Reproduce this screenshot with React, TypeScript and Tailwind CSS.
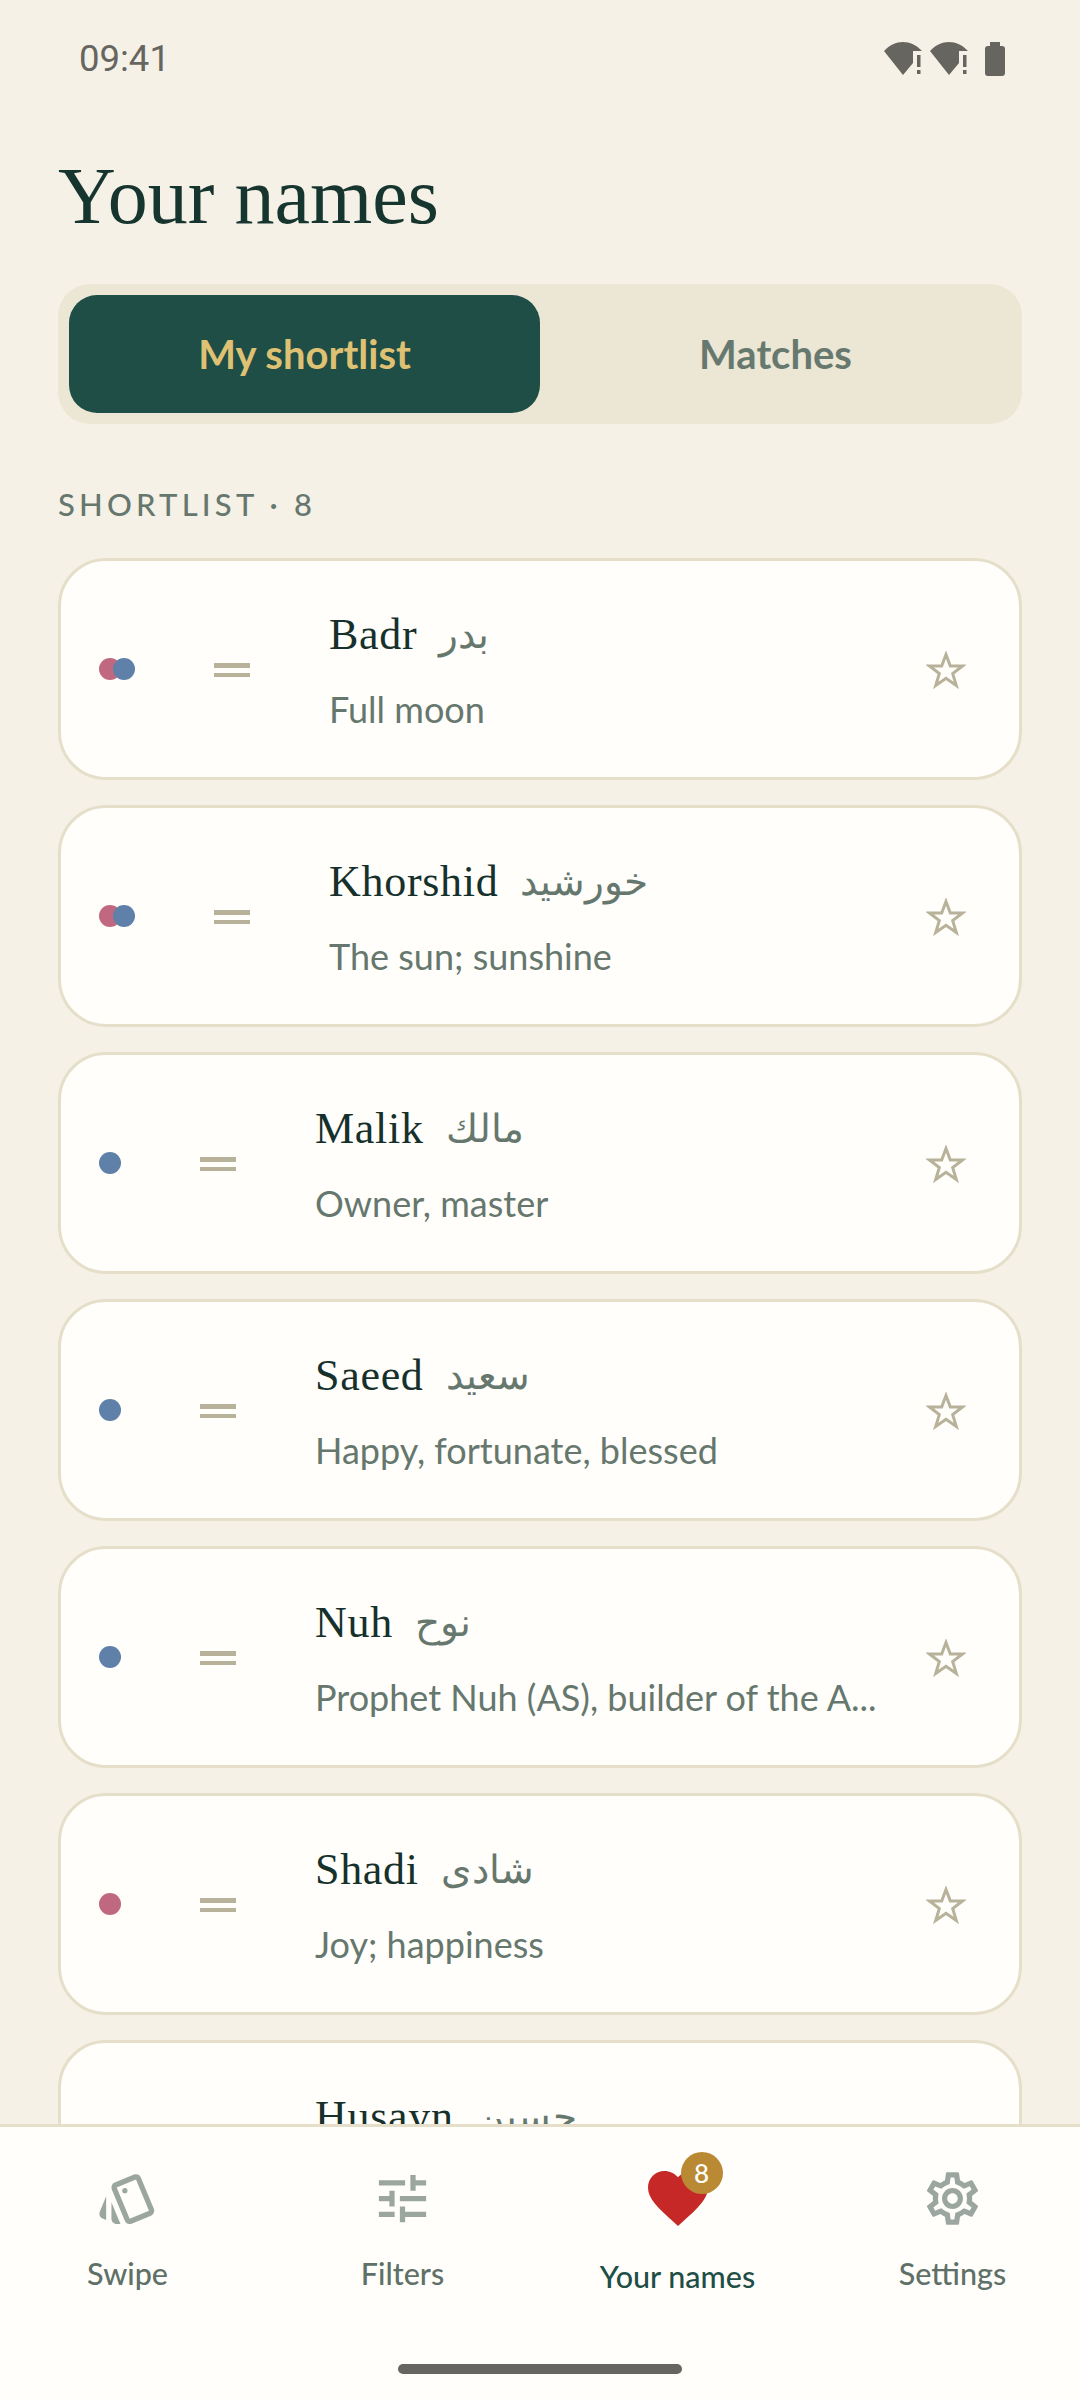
import { MdFavorite, MdOutlineSettings, MdOutlineStyle, MdTune } from "react-icons/md"

const names = [
  { latin: "Badr", arabic: "بدر", meaning: "Full moon", dots: ["pink", "blue"] },
  { latin: "Khorshid", arabic: "خورشيد", meaning: "The sun; sunshine", dots: ["pink", "blue"] },
  { latin: "Malik", arabic: "مالك", meaning: "Owner, master", dots: ["blue"] },
  { latin: "Saeed", arabic: "سعيد", meaning: "Happy, fortunate, blessed", dots: ["blue"] },
  { latin: "Nuh", arabic: "نوح", meaning: "Prophet Nuh (AS), builder of the A...", dots: ["blue"] },
  { latin: "Shadi", arabic: "شادى", meaning: "Joy; happiness", dots: ["pink"] },
  // sits under the nav, only the top of the name shows
  { latin: "Husayn", arabic: "حسين", meaning: "", dots: [] },
]

function WifiAlert() {
  return (
    <svg width="40" height="34" viewBox="0 0 40 34" fill="#67655f">
      <path d="M19 33 L0 9 C11 -3 27 -3 38 9 L29 9 L29 21 Z" />
      <rect x="33" y="13" width="3.5" height="12" />
      <rect x="33" y="28" width="3.5" height="4" />
    </svg>
  )
}

function Battery() {
  return (
    <svg width="20" height="34" viewBox="0 0 20 34" fill="#67655f">
      <path d="M5 0 H15 V4 H17 Q20 4 20 7 V31 Q20 34 17 34 H3 Q0 34 0 31 V7 Q0 4 3 4 H5 Z" />
    </svg>
  )
}

function StarOutline() {
  return (
    <svg className="ml-[28px] mt-[2px] shrink-0" width="40" height="38" viewBox="0 0 40 38" fill="none" stroke="#b8b29b" strokeWidth="3">
      <polygon points="20,3.5 24.3,15 36.5,15 26.7,22.6 30.3,34.5 20,27.3 9.7,34.5 13.3,22.6 3.5,15 15.7,15" />
    </svg>
  )
}

function NameCard({ latin, arabic, meaning, dots }: (typeof names)[number]) {
  return (
    <div className="flex h-[222px] shrink-0 items-center rounded-[48px] border-[3px] border-[#e5dfca] bg-[#fffefa] pl-[38px] pr-[53px]">
      <div className="flex min-w-[22px]">
        {dots.map((dot, i) => (
          <span
            key={dot}
            className={`h-[22px] w-[22px] rounded-full ${dot === "pink" ? "bg-[#c0687f]" : "bg-[#5f80a8]"} ${i > 0 ? "-ml-[8px]" : ""}`}
          />
        ))}
      </div>
      <div className="ml-[79px] mt-[2px] flex w-[36px] flex-col gap-[5px]">
        <span className="h-[4.5px] bg-[#b8b29b]" />
        <span className="h-[4.5px] bg-[#b8b29b]" />
      </div>
      <div className="ml-[79px] flex min-w-0 flex-1 flex-col gap-[24px]">
        <div className="flex h-[56px] items-center gap-[22px] whitespace-nowrap font-['Liberation_Serif',serif] leading-[56px]">
          <span className="text-[44px] tracking-[0.7px] text-[#16302b]">{latin}</span>
          <span className="text-[39px] text-[#66776e]" dir="rtl">{arabic}</span>
        </div>
        <p className="h-[44px] truncate text-[36px] leading-[44px] text-[#66776e]">{meaning}</p>
      </div>
      <StarOutline />
    </div>
  )
}

function NavItem({ label, icon, active }: { label: string; icon: React.ReactNode; active?: boolean }) {
  return (
    <div className="flex flex-col items-center">
      <div className="flex h-[64px] items-center justify-center">{icon}</div>
      <span className={`text-[30.5px] font-medium leading-[40px] ${active ? "mt-[26px] text-[#1f4e46]" : "mt-[23px] text-[#5f7068]"}`}>
        {label}
      </span>
    </div>
  )
}

export default function App() {
  return (
    <div className="flex h-[2400px] w-[1080px] flex-col overflow-hidden bg-[#f5f1e6] font-['Lato',sans-serif]">
      {/* Status bar */}
      <div className="flex h-[146px] shrink-0 items-start justify-between pl-[79px] pr-[75px] pt-[37px]">
        <span className="font-['Roboto',sans-serif] text-[36.5px] leading-[44px] text-[#67655f]">09:41</span>
        <div className="flex items-center pt-[5px]">
          <WifiAlert />
          <span className="w-[6px]" />
          <WifiAlert />
          <span className="w-[15px]" />
          <Battery />
        </div>
      </div>

      <div className="flex min-h-0 flex-1 flex-col overflow-hidden px-[58px]">
        <h1 className="font-['Liberation_Serif',serif] text-[80px] font-normal leading-[100px] text-[#16352f]">Your names</h1>

        {/* Tabs */}
        <div className="mt-[38px] grid h-[140px] shrink-0 grid-cols-2 rounded-[32px] bg-[#ece6d4] p-[11px]">
          <div className="flex items-center justify-center rounded-[28px] bg-[#1f4e46] text-[40px] font-bold text-[#dfc173]">
            My shortlist
          </div>
          <div className="flex items-center justify-center text-[40px] font-bold text-[#67786f]">Matches</div>
        </div>

        <div className="mt-[60px] h-[40px] text-[31px] font-medium leading-[40px] tracking-[4.2px] text-[#66776e]">SHORTLIST · 8</div>

        {/* Cards */}
        <div className="mt-[34px] flex flex-col gap-[25px]">
          {names.map((name) => (
            <NameCard key={name.latin} {...name} />
          ))}
        </div>
      </div>

      {/* Bottom nav */}
      <div className="flex h-[276px] shrink-0 flex-col border-t-[3px] border-[#e5dfca] bg-[#fffefa]">
        <div className="-mx-[10px] mt-[39px] grid grid-cols-4">
          <NavItem label="Swipe" icon={<MdOutlineStyle size={63} color="#9ca6a0" />} />
          <NavItem label="Filters" icon={<MdTune size={63} color="#9ca6a0" />} />
          <NavItem
            active
            label="Your names"
            icon={
              <div className="relative">
                <MdFavorite size={72} color="#c62828" />
                <span className="absolute left-[39px] top-[-10px] flex h-[42px] w-[42px] items-center justify-center rounded-full bg-[#b98a33] text-[26px] font-medium text-[#fffefa]">
                  8
                </span>
              </div>
            }
          />
          <NavItem label="Settings" icon={<MdOutlineSettings size={63} color="#9ca6a0" />} />
        </div>
        <div className="mx-auto mt-[68px] h-[10px] w-[284px] rounded-full bg-[#67655f]" />
      </div>
    </div>
  )
}
